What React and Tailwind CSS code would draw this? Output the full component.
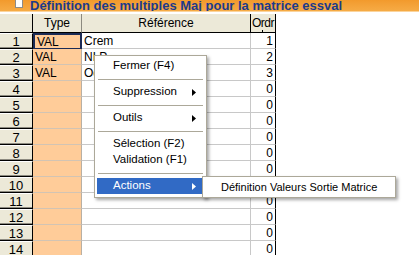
import React from 'react';

const rows = [
  { n: 1, type: 'VAL', ref: 'Crem', ordr: 1 },
  { n: 2, type: 'VAL', ref: 'NLP', ordr: 2 },
  { n: 3, type: 'VAL', ref: 'Oc', ordr: 3 },
  { n: 4, type: '', ref: '', ordr: 0 },
  { n: 5, type: '', ref: '', ordr: 0 },
  { n: 6, type: '', ref: '', ordr: 0 },
  { n: 7, type: '', ref: '', ordr: 0 },
  { n: 8, type: '', ref: '', ordr: 0 },
  { n: 9, type: '', ref: '', ordr: 0 },
  { n: 10, type: '', ref: '', ordr: 0 },
  { n: 11, type: '', ref: '', ordr: 0 },
  { n: 12, type: '', ref: '', ordr: 0 },
  { n: 13, type: '', ref: '', ordr: 0 },
  { n: 14, type: '', ref: '', ordr: 0 },
];

const Arrow = ({ white }) => (
  <svg width="4" height="7" viewBox="0 0 4 7" className="shrink-0">
    <path d="M0 0 L4 3.5 L0 7 Z" fill={white ? '#ffffff' : '#000000'} />
  </svg>
);

const MenuItem = ({ label, sub, active }) => (
  <div
    className={`flex h-[16px] items-center justify-between pl-[16px] pr-[8px] ${
      active ? 'bg-[#316ac5] text-white' : 'text-black'
    }`}
  >
    <span className="leading-none whitespace-nowrap">{label}</span>
    {sub && <Arrow white={active} />}
  </div>
);

const Sep = () => (
  <div className="flex h-[10px] items-center px-[1px]">
    <div className="h-px w-full bg-[#aca899]" />
  </div>
);

export default function App() {
  return (
    <div className="relative h-[255px] w-[419px] overflow-hidden bg-white font-['Liberation_Sans',Arial,sans-serif] text-[12px] text-black">
      {/* title bar, cut off at the top */}
      <div className="flex h-[11px] items-end overflow-hidden bg-gradient-to-b from-[#f29a2c] to-[#f6ab45] pl-[15px]">
        <div className="mb-[3px] h-[10px] w-[8px] shrink-0 border border-[#8c8c8c] bg-white" />
        <span className="mb-[-1px] ml-[7px] whitespace-nowrap text-[13px] font-bold leading-none text-[#1c3a8a]">
          Définition des multiples Maj pour la matrice essval
        </span>
      </div>
      <div className="h-px bg-[#fbd49c]" />
      <div className="h-[2px] bg-white" />

      {/* grid header */}
      <div className="flex h-[19px]">
        <div className="w-[33px] border-r border-b border-r-black border-b-black bg-[#ece9d8]" />
        <div className="flex w-[49px] items-center justify-center border-r border-b border-r-[#8c8a80] border-b-black bg-[#ece9d8]">
          Type
        </div>
        <div className="flex w-[169px] items-center justify-center border-r border-b border-r-black border-b-black bg-[#ece9d8]">
          Référence
        </div>
        <div className="relative flex w-[25px] items-center overflow-hidden border-r border-b border-black bg-[#ece9d8] pl-[1px]">
          <span className="tracking-[-0.5px]">Ordr</span>
          <span className="absolute bottom-[0px] left-[11px] h-[2px] w-px bg-black" />
        </div>
      </div>

      {/* grid rows */}
      {rows.map((r) => (
        <div key={r.n} className="flex h-[16px]">
          <div className="flex w-[33px] items-center justify-center border-t border-r border-b border-t-white border-r-black border-b-black bg-[#ece9d8] text-[13px] leading-none shadow-[inset_0_-1px_0_#8c8a80]">
            {r.n}
          </div>
          <div
            className={`flex w-[49px] items-center border-b bg-[#ffcc99] pl-[2px] leading-none ${
              r.n === 1
                ? 'border-2 border-[#1b2b55]'
                : 'border-r border-r-[#b8b0a4] border-b-[#d2c4b4]'
            }`}
          >
            {r.type}
          </div>
          <div className="flex w-[169px] items-center border-r border-b border-[#c8c8c8] pl-[2px] leading-none">
            {r.ref}
          </div>
          <div className="flex w-[25px] items-center justify-end border-r border-b border-r-black border-b-[#c8c8c8] pr-[2px] leading-none">
            {r.ordr}
          </div>
        </div>
      ))}

      {/* context menu */}
      <div className="absolute top-[55px] left-[94px] w-[113px] border border-[#aca899] bg-white px-[2px] pt-[2px] pb-[3px] text-[11.5px] shadow-[2px_2px_3px_rgba(0,0,0,0.35)]">
        <MenuItem label="Fermer (F4)" />
        <Sep />
        <MenuItem label="Suppression" sub />
        <Sep />
        <MenuItem label="Outils" sub />
        <Sep />
        <MenuItem label="Sélection (F2)" />
        <MenuItem label="Validation (F1)" />
        <Sep />
        <MenuItem label="Actions" sub active />
      </div>

      {/* submenu */}
      <div className="absolute top-[176px] left-[202px] w-[194px] border border-[#aca899] bg-white px-[2px] pt-[2px] pb-[2px] text-[11px] shadow-[2px_2px_3px_rgba(0,0,0,0.35)]">
        <MenuItem label="Définition Valeurs Sortie Matrice" />
      </div>
    </div>
  );
}
